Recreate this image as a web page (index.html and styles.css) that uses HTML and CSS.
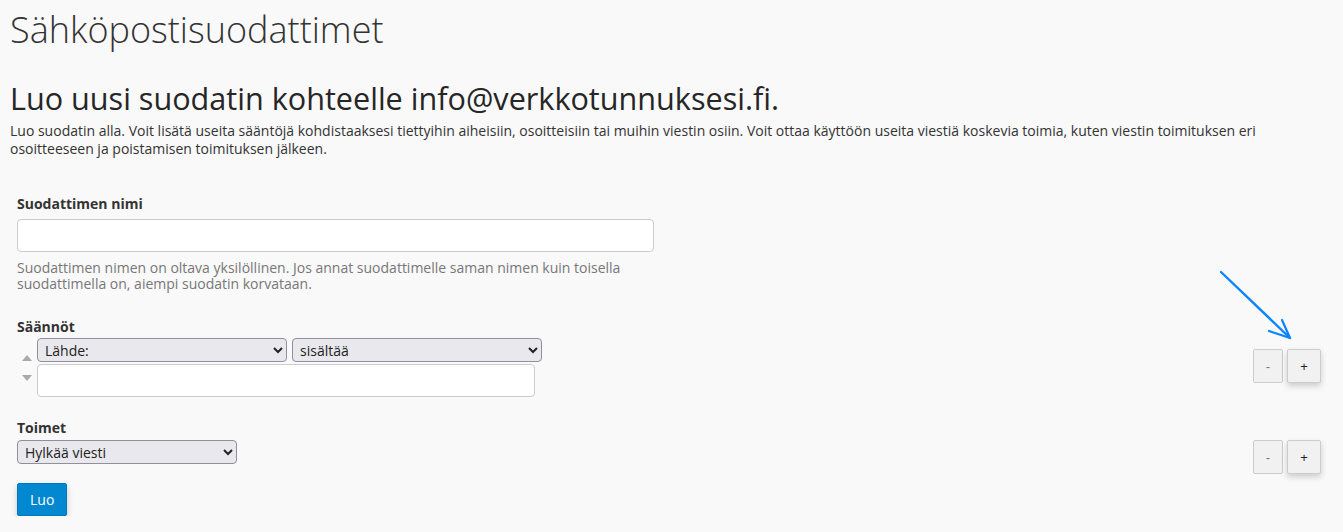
FILE: index.html
```html
<!DOCTYPE html>
<html>
  <head>
    <title>Sähköpostisuodattimet</title>
    <link rel="stylesheet" href="styles.css">
  </head>
  <body>
    <div class="page">
      <h1 class="pageTitle">Sähköpostisuodattimet</h1>

      <h2 class="subTitle">Luo uusi suodatin kohteelle info@verkkotunnuksesi.fi.</h2>
      <p class="intro">
        Luo suodatin alla. Voit lisätä useita sääntöjä kohdistaaksesi tiettyihin aiheisiin, osoitteisiin tai muihin viestin osiin. Voit ottaa käyttöön useita viestiä koskevia toimia, kuten viestin toimituksen eri osoitteeseen ja poistamisen toimituksen jälkeen.
      </p>

      <form class="filterForm">

        <div class="field">
          <label class="fieldLabel nameLabel" for="filterName">Suodattimen nimi</label>
          <input id="filterName" class="textBox nameBox">
          <p class="helpText">
            Suodattimen nimen on oltava yksilöllinen. Jos annat suodattimelle saman nimen kuin toisella suodattimella on, aiempi suodatin korvataan.
          </p>
        </div>

        <!--RULES-->
        <div class="field rules">
          <div class="fieldLabel">Säännöt</div>
          <div class="ruleRow">
            <div class="ruleLeft">
              <div class="moveArrows">
                <span class="moveUp"></span>
                <span class="moveDown"></span>
              </div>
              <div class="ruleInputs">
                <div class="selectRow">
                  <select class="selectBox ruleSelect">
                    <option>Lähde:</option>
                  </select>
                  <select class="selectBox ruleSelect">
                    <option>sisältää</option>
                  </select>
                </div>
                <input class="textBox ruleBox">
              </div>
            </div>
            <div class="plusMinus">
              <button type="button" class="smallButton">-</button>
              <button type="button" class="smallButton raised">+</button>
            </div>
            <!-- arrow pointing at the add button -->
            <svg class="pointer" width="72" height="70" viewBox="0 0 72 70">
              <path d="M1 2 L70 68" stroke="#0a84ff" stroke-width="2.4" stroke-linecap="round" fill="none"/>
              <path d="M49 61 L70 68 L62 50" stroke="#0a84ff" stroke-width="2.2" stroke-linecap="round" stroke-linejoin="round" fill="none"/>
            </svg>
          </div>
        </div>

        <!--ACTIONS-->
        <div class="field actions">
          <div class="fieldLabel">Toimet</div>
          <div class="actionRow">
            <select class="selectBox actionSelect">
              <option>Hylkää viesti</option>
            </select>
            <div class="plusMinus">
              <button type="button" class="smallButton">-</button>
              <button type="button" class="smallButton raised">+</button>
            </div>
          </div>
        </div>

        <button type="button" class="createButton">Luo</button>

      </form>
    </div>
  </body>
</html>
```

FILE: styles.css
```css
body{
  margin: 0;
  background-color: #f9f9f9;
  color: #333;
  font-family: "Open Sans", Arial, sans-serif;
}

.page{
  padding: 0 10px;
}

.pageTitle{
  font-size: 36px;
  font-weight: 300;
  margin: 8px 0 0 0;
  line-height: 44px;
}

.subTitle{
  font-size: 30.6px;
  font-weight: 500;
  color: #262626;
  margin: 27px 0 0 0;
  line-height: 38px;
}

.intro{
  font-size: 14px;
  line-height: 18px;
  margin: 5px 0 0 0;
}

.filterForm{
  padding: 0 12px 0 7px;
  margin-top: 36px;
}

.field{
  margin-bottom: 20px;
}

.fieldLabel{
  display: block;
  font-size: 14px;
  font-weight: bold;
  margin-bottom: 2px;
}

.nameLabel{
  margin-bottom: 6px;
}

.textBox{
  border: 1px solid #ccc;
  border-radius: 4px;
  background-color: white;
  height: 33px;
  box-sizing: border-box;
  font-size: 14px;
}

.nameBox{
  width: 637px;
  display: block;
}

.helpText{
  color: #777;
  font-size: 14px;
  line-height: 16px;
  width: 640px;
  margin: 8px 0 0 0;
}

.rules{
  margin-top: 25px;
}

.ruleRow{
  position: relative;
  display: flex;
  justify-content: space-between;
  align-items: flex-start;
}

.ruleLeft{
  display: flex;
  align-items: center;
}

.moveArrows{
  display: flex;
  flex-direction: column;
  gap: 14px;
  width: 20px;
  align-items: center;
}

.moveUp{
  width: 0;
  height: 0;
  border-left: 5px solid transparent;
  border-right: 5px solid transparent;
  border-bottom: 6px solid #aaa;
}

.moveDown{
  width: 0;
  height: 0;
  border-left: 5px solid transparent;
  border-right: 5px solid transparent;
  border-top: 6px solid #aaa;
}

.selectRow{
  display: flex;
  gap: 5px;
  margin-bottom: 2px;
}

.selectBox{
  font-family: "Open Sans", Arial, sans-serif;
  font-size: 14px;
  color: #222;
  background-color: #e9e9ed;
  border: 1px solid #8f8f9d;
  border-radius: 4px;
  height: 24px;
  padding: 0 3px;
}

.ruleSelect{
  width: 250px;
}

.ruleBox{
  width: 498px;
  display: block;
}

.plusMinus{
  display: flex;
  gap: 4px;
  margin-top: 11px;
}

.smallButton{
  width: 30px;
  height: 34px;
  border: 1px solid #ccc;
  border-radius: 2px;
  background-color: #f1f1f1;
  color: #777;
  font-size: 13px;
  cursor: pointer;
}

.raised{
  width: 34px;
  color: #222;
  box-shadow: 0 3px 6px rgba(0, 0, 0, 0.18);
}

.pointer{
  position: absolute;
  right: 29px;
  top: -68px;
}

.actions{
  margin-top: 21px;
  margin-bottom: 9px;
}

.actions .fieldLabel{
  margin-bottom: 3px;
}

.actionRow{
  display: flex;
  justify-content: space-between;
  align-items: flex-start;
}

.actionRow .plusMinus{
  margin-top: 0;
}

.actionSelect{
  width: 220px;
}

.createButton{
  border: 1px solid #0277bd;
  border-radius: 2px;
  background-color: #0288d1;
  color: white;
  font-family: "Open Sans", Arial, sans-serif;
  font-size: 14px;
  padding: 6px 12px;
  height: 33px;
  box-shadow: 0 3px 6px rgba(0, 0, 0, 0.2);
  cursor: pointer;
}
```
